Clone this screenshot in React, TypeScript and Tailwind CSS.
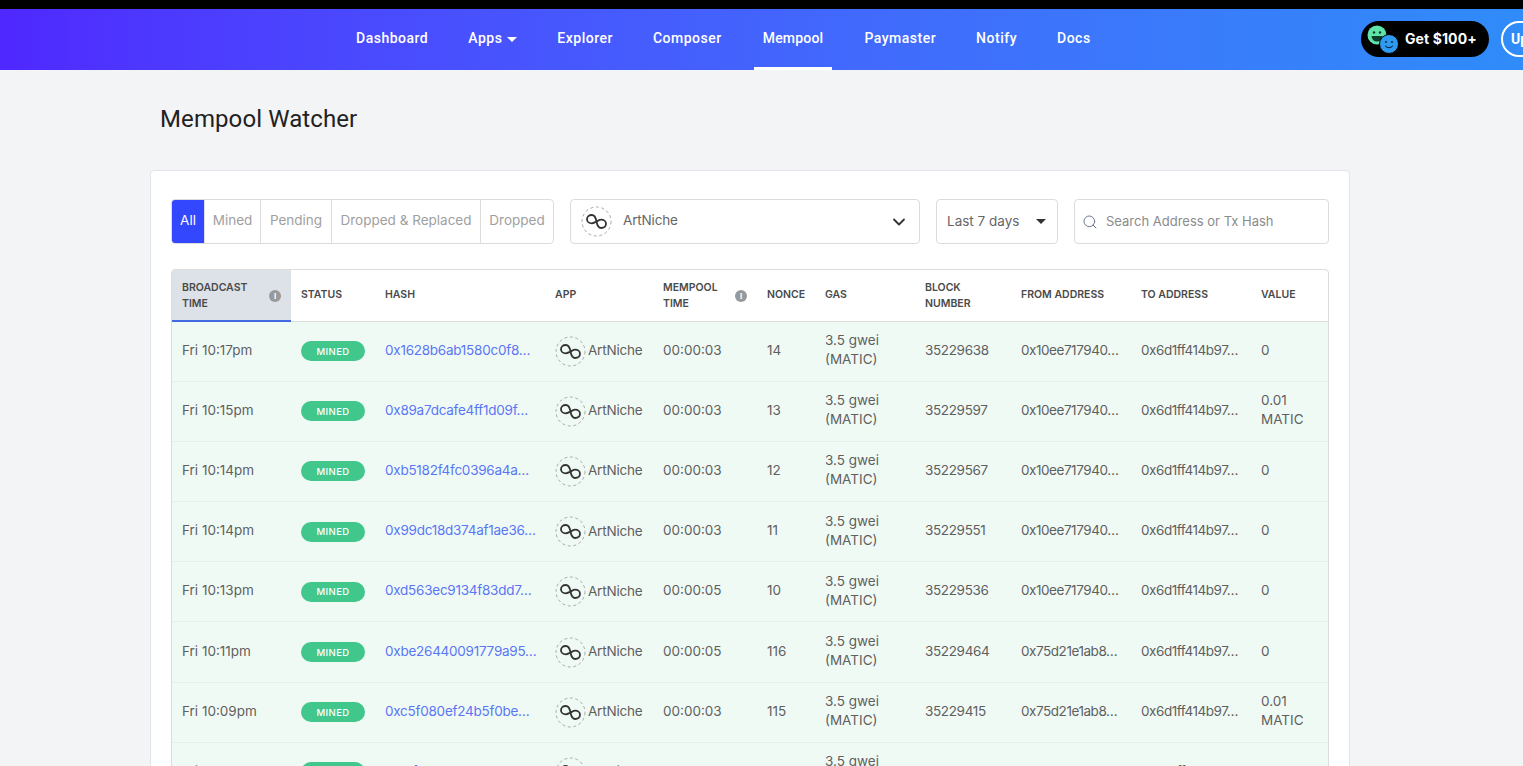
import { ChevronDown, Search } from "lucide-react";

const navItems = ["Dashboard", "Apps", "Explorer", "Composer", "Mempool", "Paymaster", "Notify", "Docs"];

type Row = {
  time: string;
  hash: string;
  mempool: string;
  nonce: string;
  block: string;
  from: string;
  value: string;
};

const rows: Row[] = [
  { time: "Fri 10:17pm", hash: "0x1628b6ab1580c0f8…", mempool: "00:00:03", nonce: "14", block: "35229638", from: "0x10ee717940…", value: "0" },
  { time: "Fri 10:15pm", hash: "0x89a7dcafe4ff1d09f…", mempool: "00:00:03", nonce: "13", block: "35229597", from: "0x10ee717940…", value: "0.01 MATIC" },
  { time: "Fri 10:14pm", hash: "0xb5182f4fc0396a4a…", mempool: "00:00:03", nonce: "12", block: "35229567", from: "0x10ee717940…", value: "0" },
  { time: "Fri 10:14pm", hash: "0x99dc18d374af1ae36…", mempool: "00:00:03", nonce: "11", block: "35229551", from: "0x10ee717940…", value: "0" },
  { time: "Fri 10:13pm", hash: "0xd563ec9134f83dd7…", mempool: "00:00:05", nonce: "10", block: "35229536", from: "0x10ee717940…", value: "0" },
  { time: "Fri 10:11pm", hash: "0xbe26440091779a95…", mempool: "00:00:05", nonce: "116", block: "35229464", from: "0x75d21e1ab8…", value: "0" },
  { time: "Fri 10:09pm", hash: "0xc5f080ef24b5f0be…", mempool: "00:00:03", nonce: "115", block: "35229415", from: "0x75d21e1ab8…", value: "0.01 MATIC" },
  { time: "Fri 10:07pm", hash: "0xa1f09c32de77b01c…", mempool: "00:00:03", nonce: "114", block: "35229380", from: "0x75d21e1ab8…", value: "0" },
];

function AppLogo() {
  return (
    <svg width="31" height="31" viewBox="0 0 31 31" fill="none" className="shrink-0">
      <circle cx="15.5" cy="15.5" r="14.5" stroke="#a8a8a8" strokeWidth="1" strokeDasharray="3 2.6" />
      <path
        d="M15.5 15.5C14.8 11.5 13.5 9 10.8 9 8 9 6 10.8 6 13.2 6 15.6 8 17.3 10.8 17.3 12.6 17.3 13.8 16.3 15.5 15.5 17.2 14.7 18.4 13.7 20.2 13.7 23 13.7 25 15.4 25 17.8 25 20.2 23 22 20.2 22 17.5 22 16.2 19.5 15.5 15.5Z"
        stroke="#333"
        strokeWidth="1.8"
        strokeLinejoin="round"
      />
    </svg>
  );
}

function InfoDot() {
  return (
    <span className="flex h-3 w-3 shrink-0 items-center justify-center rounded-full bg-[#999] font-['Inter',sans-serif] text-[8px] font-bold leading-none text-white">
      i
    </span>
  );
}

function Faces() {
  return (
    <svg width="34" height="32" viewBox="0 0 34 32" className="shrink-0">
      <circle cx="11" cy="12" r="9.5" fill="#5fe3a8" />
      <circle cx="8" cy="9.5" r="1.2" fill="#0c3d2c" />
      <circle cx="14" cy="9.5" r="1.2" fill="#0c3d2c" />
      <path d="M5.5 13h11a5.5 5.5 0 0 1-11 0z" fill="#0c3d2c" />
      <circle cx="23" cy="21" r="9.5" fill="#2f9bf0" stroke="#000" strokeWidth="1" />
      <circle cx="20" cy="19" r="1.1" fill="#0b2f52" />
      <circle cx="26" cy="19" r="1.1" fill="#0b2f52" />
      <path d="M19.5 23c1.5 2.2 5.5 2.2 7 0" fill="none" stroke="#0b2f52" strokeWidth="1.1" strokeLinecap="round" />
    </svg>
  );
}

function TopNav() {
  return (
    <header className="flex h-[61px] shrink-0 items-stretch bg-gradient-to-r from-[#4f27ff] to-[#2f8cf9] pl-[347px] font-['Roboto',sans-serif]">
      <nav className="flex items-stretch gap-[22px]">
        {navItems.map((item) => (
          <a
            key={item}
            className={`flex items-center gap-[5px] border-b-[3px] px-[9px] pt-[1px] text-[14px] font-medium text-white ${
              item === "Mempool" ? "mx-[1px] border-white tracking-[0.2px]" : "border-transparent tracking-[0.5px]"
            }`}
          >
            {item}
            {item === "Apps" && <span className="mt-[1px] h-0 w-0 border-x-[5px] border-t-[5px] border-x-transparent border-t-white" />}
          </a>
        ))}
      </nav>
      <div className="ml-auto flex items-center gap-3 pb-[1px]">
        <button className="flex h-9 w-32 items-center gap-[5px] rounded-full bg-black pl-[5px] font-['Inter',sans-serif] text-[14px] font-bold tracking-[0.1px] text-white">
          <Faces />
          <span className="-mt-[2px]">Get $100+</span>
        </button>
        <button className="-mr-[36px] flex h-9 w-[58px] items-center rounded-full border-2 border-white pl-[8px] text-[14px] font-bold text-white">
          Up
        </button>
      </div>
    </header>
  );
}

function Filters() {
  const tabs = [
    { label: "Mined", width: "w-[56px]" },
    { label: "Pending", width: "w-[71px]" },
    { label: "Dropped & Replaced", width: "w-[149px]" },
    { label: "Dropped", width: "w-[73px]" },
  ];
  return (
    <div className="flex h-[45px] items-stretch font-['Inter',sans-serif] text-[13.5px] text-[#a0a0a0]">
      <div className="flex w-[383px] overflow-hidden rounded border border-[#dcdcdc]">
        <span className="flex w-[32px] items-center justify-center bg-[#3347ff] pb-[2px] text-white">All</span>
        {tabs.map((tab) => (
          <span key={tab.label} className={`flex items-center justify-center whitespace-nowrap border-l border-[#dcdcdc] pb-[2px] ${tab.width}`}>
            {tab.label}
          </span>
        ))}
      </div>
      <div className="ml-4 flex w-[350px] items-center rounded border border-[#dcdcdc] pl-[10px] pr-[10px] text-[#666]">
        <AppLogo />
        <span className="mb-[2px] ml-[11px] tracking-[-0.15px]">ArtNiche</span>
        <ChevronDown className="ml-auto h-5 w-5 text-[#333]" strokeWidth={2.2} />
      </div>
      <div className="ml-4 flex w-[122px] items-center justify-between rounded border border-[#dcdcdc] pl-[10px] pr-[11px] text-[#666]">
        Last 7 days
        <span className="h-0 w-0 border-x-[5px] border-t-[5px] border-x-transparent border-t-[#333]" />
      </div>
      <div className="ml-4 flex w-[255px] items-center gap-[8px] rounded border border-[#dcdcdc] pl-[7px] text-[13px] text-[#8b8b8b]">
        <Search className="h-4 w-4 text-[#6b7690]" strokeWidth={1.5} />
        Search Address or Tx Hash
      </div>
    </div>
  );
}

function TxTable() {
  const th = "px-[10px] text-left align-middle text-[10.5px] font-semibold uppercase leading-4 text-[#4a4a4a]";
  const thOne = `${th} border-b border-[#dcdcdc] pb-[1px]`;
  const thTwo = `${th} pt-[1px]`;
  const cell = "px-[10px] align-middle text-[13.5px] leading-[19px] text-[#5f5f5f]";
  const td = `${cell} pb-[2px]`;
  return (
    <div className="mt-[25px] overflow-hidden rounded-t border border-[#dcdcdc] font-['Inter',sans-serif]">
      <table className="w-full table-fixed border-collapse">
        <colgroup>
          <col className="w-[119px]" />
          <col className="w-[84px]" />
          <col className="w-[170px]" />
          <col className="w-[108px]" />
          <col className="w-[104px]" />
          <col className="w-[58px]" />
          <col className="w-[100px]" />
          <col className="w-[96px]" />
          <col className="w-[120px]" />
          <col className="w-[120px]" />
          <col className="w-[77px]" />
        </colgroup>
        <thead>
          <tr className="h-[51px]">
            <th className={`${thTwo} border-b-2 border-[#4169e1] bg-[#dde2e9]`}>
              <div className="flex items-center justify-between">
                <span>
                  Broadcast
                  <br />
                  Time
                </span>
                <InfoDot />
              </div>
            </th>
            <th className={thOne}>Status</th>
            <th className={thOne}>Hash</th>
            <th className={thOne}>App</th>
            <th className={`${thTwo} border-b border-[#dcdcdc]`}>
              <div className="flex items-center justify-between">
                <span>
                  Mempool
                  <br />
                  Time
                </span>
                <InfoDot />
              </div>
            </th>
            <th className={thOne}>Nonce</th>
            <th className={thOne}>Gas</th>
            <th className={`${thTwo} border-b border-[#dcdcdc]`}>
              Block
              <br />
              Number
            </th>
            <th className={`${thOne} whitespace-nowrap`}>From Address</th>
            <th className={`${thOne} whitespace-nowrap`}>To Address</th>
            <th className={thOne}>Value</th>
          </tr>
        </thead>
        <tbody>
          {rows.map((row, i) => (
            <tr key={i} className="h-[60.2px] border-b border-[#e8f0ec] bg-[#f0faf5]">
              <td className={`${td} whitespace-nowrap`}>{row.time}</td>
              <td className={cell}>
                <span className="flex h-5 w-16 items-center justify-center rounded-full bg-[#41c78c] text-[9.5px] font-medium tracking-[0.4px] text-white">
                  MINED
                </span>
              </td>
              <td className={`${td} whitespace-nowrap`}>
                <a className="tracking-[-0.25px] text-[#5a76f5]">{row.hash}</a>
              </td>
              <td className={`${cell} pr-0`}>
                <span className="flex items-center gap-[2px] tracking-[-0.2px]">
                  <AppLogo />
                  <span className="pb-[1px]">ArtNiche</span>
                </span>
              </td>
              <td className={td}>{row.mempool}</td>
              <td className={td}>{row.nonce}</td>
              <td className={td}>
                3.5 gwei
                <br />
                (MATIC)
              </td>
              <td className={`${td} tracking-[-0.35px]`}>{row.block}</td>
              <td className={`${td} whitespace-nowrap tracking-[-0.45px]`}>{row.from}</td>
              <td className={`${td} whitespace-nowrap tracking-[-0.45px]`}>0x6d1ff414b97…</td>
              <td className={td}>{row.value}</td>
            </tr>
          ))}
        </tbody>
      </table>
    </div>
  );
}

export default function App() {
  return (
    <div className="flex h-[766px] flex-col overflow-hidden bg-[#f3f4f6]">
      <div className="h-[9px] shrink-0 bg-black" />
      <TopNav />
      <main className="ml-[150px] w-[1200px]">
        <h1 className="pl-[10px] pt-[33px] font-['Roboto',sans-serif] text-[24px] leading-[32px] tracking-[0.1px] text-[#222]">Mempool Watcher</h1>
        <section className="mt-[35px] rounded-t border border-[#e2e4e8] bg-white px-5 pt-[28px]">
          <Filters />
          <TxTable />
        </section>
      </main>
    </div>
  );
}
